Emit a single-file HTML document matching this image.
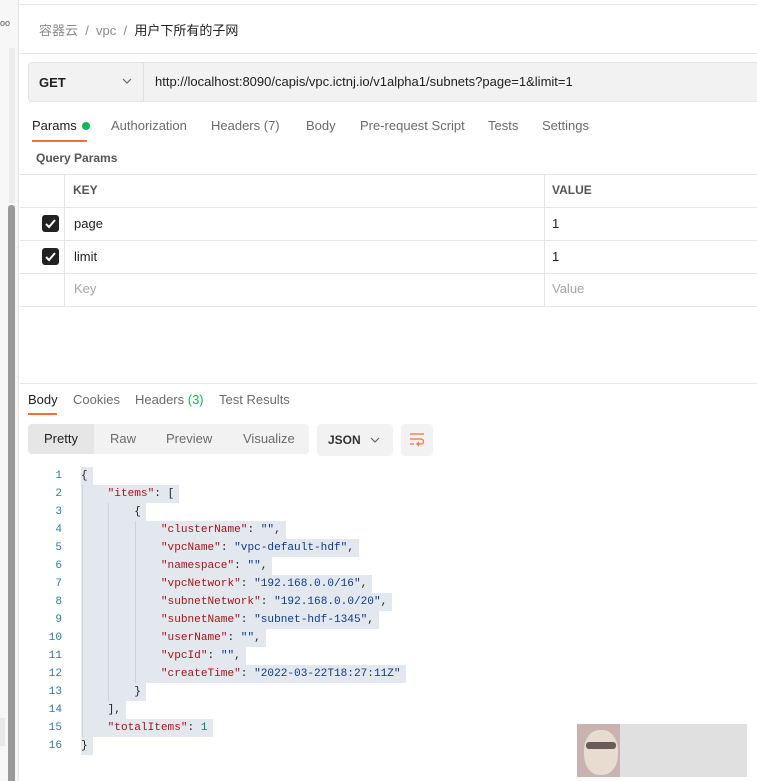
<!DOCTYPE html>
<html><head><meta charset="utf-8"><style>
*{margin:0;padding:0;box-sizing:border-box}
body{width:757px;height:781px;overflow:hidden;background:#fff;font-family:"Liberation Sans","Noto Sans CJK SC",sans-serif;font-size:13px;color:#212121;position:relative}
.a{position:absolute;white-space:nowrap}
.g{color:#6b6b6b}
.code{position:absolute;left:81px;top:467px;font-family:"Liberation Mono",monospace;font-size:11.1px;line-height:18px}
.code div{height:18px;white-space:pre}
.code span.h{background:#e3e7ee;display:inline-block;height:18px;padding-right:5px}
.k{color:#a31515}.s{color:#0d3a8c}.n{color:#09806a}
.ln{position:absolute;left:30px;width:32px;text-align:right;top:467px;font-family:"Liberation Mono",monospace;font-size:11.1px;line-height:18px;color:#2a7aa6}
.guide{position:absolute;width:1px;background:#cfd3da}
</style></head><body>
<div class="a" style="left:0;top:0;width:19px;height:781px;background:#f7f7f7;border-right:1px solid #e4e4e4"></div>
<div class="a" style="left:0;top:18px;font-size:9px;color:#555">oo</div>
<div class="a" style="left:8px;top:205px;width:7px;height:576px;background:#9a9a9a;border-radius:3px 3px 0 0"></div>
<div class="a" style="left:9px;top:48px;width:6px;height:155px;background:#ececec"></div>
<div class="a" style="left:0;top:718px;width:5px;height:28px;background:#e8e8e8"></div>
<div class="a" style="left:20px;top:4px;width:737px;height:1px;background:#e6e6e6"></div>
<div class="a" style="left:39px;top:20px;font-size:13px"><span style="color:#8a8a8a">容器云 &nbsp;/&nbsp; vpc &nbsp;/&nbsp;</span> <span style="color:#212121">用户下所有的子网</span></div>
<div class="a" style="left:20px;top:53px;width:737px;height:1px;background:#e6e6e6"></div>
<div class="a" style="left:28px;top:62px;width:740px;height:40px;background:#f2f2f2;border:1px solid #e3e3e3;border-radius:4px"></div>
<div class="a" style="left:143px;top:63px;width:1px;height:38px;background:#e0e0e0"></div>
<div class="a" style="left:39px;top:75px;font-weight:bold;font-size:13px;color:#212121">GET</div>
<svg class="a" style="left:122px;top:77px" width="10" height="8"><path d="M1 2l4 4 4-4" fill="none" stroke="#666" stroke-width="1.2"/></svg>
<div class="a" style="left:155px;top:74px;font-size:13px;color:#212121">http://localhost:8090/capis/vpc.ictnj.io/v1alpha1/subnets?page=1&amp;limit=1</div>
<div class="a" style="left:32px;top:118px;font-size:13px">Params <span style="display:inline-block;width:8px;height:8px;border-radius:50%;background:#0cbb52;margin-left:2px"></span></div>
<div class="a" style="left:32px;top:140px;width:55px;height:2px;background:#ff6c37"></div>
<div class="a g" style="left:111px;top:118px">Authorization</div>
<div class="a g" style="left:211px;top:118px">Headers (7)</div>
<div class="a g" style="left:306px;top:118px">Body</div>
<div class="a g" style="left:360px;top:118px">Pre-request Script</div>
<div class="a g" style="left:488px;top:118px">Tests</div>
<div class="a g" style="left:542px;top:118px">Settings</div>
<div class="a" style="left:36px;top:151px;font-weight:bold;font-size:12px;color:#555">Query Params</div>
<div class="a" style="left:20px;top:174px;width:737px;height:133px;border-top:1px solid #e6e6e6"></div>
<div class="a" style="left:20px;top:207px;width:737px;height:1px;background:#e6e6e6"></div>
<div class="a" style="left:20px;top:240px;width:737px;height:1px;background:#e6e6e6"></div>
<div class="a" style="left:20px;top:273px;width:737px;height:1px;background:#e6e6e6"></div>
<div class="a" style="left:20px;top:306px;width:737px;height:1px;background:#e6e6e6"></div>
<div class="a" style="left:64px;top:174px;width:1px;height:133px;background:#e6e6e6"></div>
<div class="a" style="left:544px;top:174px;width:1px;height:133px;background:#e6e6e6"></div>
<div class="a" style="left:73px;top:183px;font-weight:bold;font-size:12px;color:#555">KEY</div>
<div class="a" style="left:552px;top:183px;font-weight:bold;font-size:12px;color:#555">VALUE</div>
<div class="a" style="left:42px;top:215px;width:17px;height:17px;background:#212121;border-radius:3px"></div>
<svg class="a" style="left:42px;top:215px" width="17" height="17"><path d="M4 9l3 3 6-7" fill="none" stroke="#fff" stroke-width="2"/></svg>
<div class="a" style="left:42px;top:248px;width:17px;height:17px;background:#212121;border-radius:3px"></div>
<svg class="a" style="left:42px;top:248px" width="17" height="17"><path d="M4 9l3 3 6-7" fill="none" stroke="#fff" stroke-width="2"/></svg>
<div class="a" style="left:74px;top:216px;font-size:13px">page</div>
<div class="a" style="left:552px;top:216px;font-size:13px">1</div>
<div class="a" style="left:74px;top:249px;font-size:13px">limit</div>
<div class="a" style="left:552px;top:249px;font-size:13px">1</div>
<div class="a" style="left:74px;top:281px;font-size:13px;color:#a6a6a6">Key</div>
<div class="a" style="left:552px;top:281px;font-size:13px;color:#a6a6a6">Value</div>
<div class="a" style="left:20px;top:383px;width:737px;height:1px;background:#e6e6e6"></div>
<div class="a" style="left:28px;top:392px">Body</div>
<div class="a" style="left:28px;top:413px;width:29px;height:2px;background:#ff6c37"></div>
<div class="a g" style="left:73px;top:392px">Cookies</div>
<div class="a g" style="left:135px;top:392px">Headers <span style="color:#0cbb52">(3)</span></div>
<div class="a g" style="left:219px;top:392px">Test Results</div>
<div class="a" style="left:28px;top:424px;width:281px;height:30px;background:#f2f2f2;border-radius:4px"></div>
<div class="a" style="left:28px;top:424px;width:66px;height:30px;background:#e6e6e6;border-radius:4px 0 0 4px"></div>
<div class="a" style="left:44px;top:431px">Pretty</div>
<div class="a g" style="left:110px;top:431px">Raw</div>
<div class="a g" style="left:166px;top:431px">Preview</div>
<div class="a g" style="left:243px;top:431px">Visualize</div>
<div class="a" style="left:317px;top:424px;width:76px;height:32px;background:#f2f2f2;border-radius:4px"></div>
<div class="a" style="left:328px;top:433px;font-weight:bold;font-size:12px;color:#333">JSON</div>
<svg class="a" style="left:370px;top:436px" width="10" height="8"><path d="M1 2l4 4 4-4" fill="none" stroke="#666" stroke-width="1.2"/></svg>
<div class="a" style="left:401px;top:424px;width:32px;height:32px;background:#f2f2f2;border-radius:4px"></div>
<svg class="a" style="left:409px;top:433px" width="16" height="14"><path d="M1 1h14M1 6h11a2.5 2.5 0 010 5H8M10 9l-2 2 2 2M1 11h4" fill="none" stroke="#ff6c37" stroke-width="1.2"/></svg>
<div class="ln"><div>1</div><div>2</div><div>3</div><div>4</div><div>5</div><div>6</div><div>7</div><div>8</div><div>9</div><div>10</div><div>11</div><div>12</div><div>13</div><div>14</div><div>15</div><div>16</div></div>
<div class="code">
<div><span class="h">{</span></div>
<div><span class="h">    <span class="k">"items"</span>: [</span></div>
<div><span class="h">        {</span></div>
<div><span class="h">            <span class="k">"clusterName"</span>: <span class="s">""</span>,</span></div>
<div><span class="h">            <span class="k">"vpcName"</span>: <span class="s">"vpc-default-hdf"</span>,</span></div>
<div><span class="h">            <span class="k">"namespace"</span>: <span class="s">""</span>,</span></div>
<div><span class="h">            <span class="k">"vpcNetwork"</span>: <span class="s">"192.168.0.0/16"</span>,</span></div>
<div><span class="h">            <span class="k">"subnetNetwork"</span>: <span class="s">"192.168.0.0/20"</span>,</span></div>
<div><span class="h">            <span class="k">"subnetName"</span>: <span class="s">"subnet-hdf-1345"</span>,</span></div>
<div><span class="h">            <span class="k">"userName"</span>: <span class="s">""</span>,</span></div>
<div><span class="h">            <span class="k">"vpcId"</span>: <span class="s">""</span>,</span></div>
<div><span class="h">            <span class="k">"createTime"</span>: <span class="s">"2022-03-22T18:27:11Z"</span></span></div>
<div><span class="h">        }</span></div>
<div><span class="h">    ],</span></div>
<div><span class="h">    <span class="k">"totalItems"</span>: <span class="n">1</span></span></div>
<div><span class="h">}</span></div>
</div>
<div class="guide" style="left:82px;top:485px;height:252px"></div>
<div class="guide" style="left:108px;top:503px;height:198px"></div>
<div class="guide" style="left:135px;top:521px;height:162px"></div>
<div class="a" style="left:577px;top:724px;width:170px;height:53px;background:#e0e0e0"></div>
<div class="a" style="left:577px;top:724px;width:43px;height:53px;background:#c9b3b0"></div>
<div class="a" style="left:584px;top:730px;width:34px;height:45px;background:#e7dccf;border-radius:45%"></div>
<div class="a" style="left:586px;top:742px;width:30px;height:7px;background:#6a5a58;border-radius:3px"></div>
</body></html>
